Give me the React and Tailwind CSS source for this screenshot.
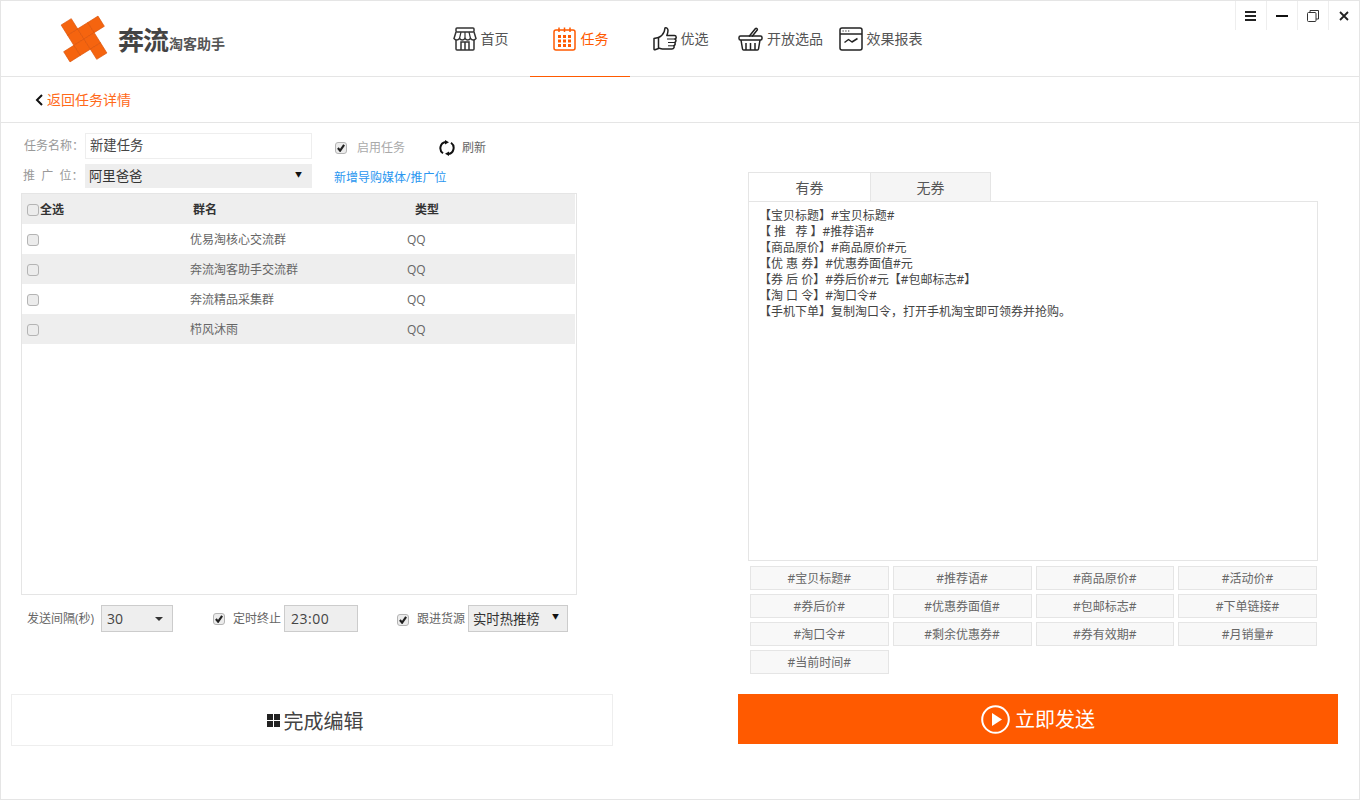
import React from "react"

const FONT = "font-['Open_Sans','Noto_Sans_CJK_SC',sans-serif]"

const navItems = [
  { label: "首页", icon: StoreIcon },
  { label: "任务", icon: CalendarIcon, active: true },
  { label: "优选", icon: ThumbIcon },
  { label: "开放选品", icon: BasketIcon },
  { label: "效果报表", icon: ReportIcon },
]

const groups = ["优易淘核心交流群", "奔流淘客助手交流群", "奔流精品采集群", "栉风沐雨"]

const template = [
  "【宝贝标题】#宝贝标题#",
  "【 推   荐 】#推荐语#",
  "【商品原价】#商品原价#元",
  "【优 惠 券】#优惠券面值#元",
  "【券 后 价】#券后价#元【#包邮标志#】",
  "【淘 口 令】#淘口令#",
  "【手机下单】复制淘口令，打开手机淘宝即可领券并抢购。",
]

const tags = [
  "#宝贝标题#", "#推荐语#", "#商品原价#", "#活动价#",
  "#券后价#", "#优惠券面值#", "#包邮标志#", "#下单链接#",
  "#淘口令#", "#剩余优惠券#", "#券有效期#", "#月销量#",
  "#当前时间#",
]

function StoreIcon() {
  return (
    <svg width="24" height="24" viewBox="0 0 24 24" fill="none" stroke="#333" strokeWidth="1.5">
      <rect x="3" y="1" width="18" height="4" rx="1" />
      <path d="M3 5L1 11.5C2.5 13.5 5 13.5 6.5 11.5C8 13.5 10.5 13.5 12 11.5C13.5 13.5 16 13.5 17.5 11.5C19 13.5 21.5 13.5 23 11.5L21 5" />
      <path d="M6.5 11.5L8 5M12 11.5V5M17.5 11.5L16 5" strokeWidth="1.2" />
      <path d="M3 13V22C3 22.6 3.4 23 4 23H20C20.6 23 21 22.6 21 22V13" />
      <path d="M8 23V15H16V23M12 15V23" />
    </svg>
  )
}

function CalendarIcon() {
  return (
    <svg width="24" height="24" viewBox="0 0 24 24" fill="none" stroke="#ff5a00" strokeWidth="1.5">
      <rect x="1" y="3" width="21" height="20" rx="2" />
      <path d="M6 0.5V5M11.5 0.5V5M17 0.5V5" />
      <g fill="#ff5a00" stroke="none">
        <rect x="5" y="8" width="3" height="3" />
        <rect x="10" y="8" width="3" height="3" />
        <rect x="15" y="8" width="3" height="3" />
        <rect x="5" y="12.5" width="3" height="3" />
        <rect x="10" y="12.5" width="3" height="3" />
        <rect x="15" y="12.5" width="3" height="3" />
        <rect x="5" y="17" width="3" height="3" />
        <rect x="10" y="17" width="3" height="3" />
        <rect x="15" y="17" width="3" height="3" />
      </g>
    </svg>
  )
}

function ThumbIcon() {
  return (
    <svg width="24" height="24" viewBox="0 0 24 24" fill="none" stroke="#222" strokeWidth="1.5" strokeLinejoin="round">
      <path d="M1 11.5L5.5 10.5V21.5L2 22.8C1.4 23 1 22.6 1 22Z" />
      <path d="M5.5 10.5C8 9.5 10 7.5 11 5C11.6 3.5 11.7 2 12 1C13.6 0.4 15 1.5 15 3.5C15 5.5 14.4 7 13.8 8.5H21.5C23.5 8.5 23.8 11.4 22 12C23.4 12.8 23.2 15 21.5 15.5C22.6 16.3 22.3 18.3 20.8 18.8C21.6 19.8 21 22 19 22H9.5C8 22 7 21.5 5.5 21" />
      <path d="M14 12H22M15 15.5H21.5M15 18.8H20.8" strokeWidth="1" />
    </svg>
  )
}

function BasketIcon() {
  return (
    <svg width="25" height="24" viewBox="0 0 25 24" fill="none" stroke="#222" strokeWidth="1.5" strokeLinejoin="round">
      <path d="M11 9.5L17.5 1.5C18.3 0.8 19.8 2 19.2 3L14 9.5" />
      <rect x="1" y="9" width="23" height="4" rx="1.5" />
      <path d="M3 13L4.5 22C4.6 22.6 5 23 5.6 23H19.4C20 23 20.4 22.6 20.5 22L22 13" />
      <path d="M8 16V23M12.5 16V23M17 16V23" />
    </svg>
  )
}

function ReportIcon() {
  return (
    <svg width="24" height="24" viewBox="0 0 24 24" fill="none" stroke="#222" strokeWidth="1.5" strokeLinejoin="round">
      <rect x="1" y="1" width="22" height="22" rx="2" />
      <path d="M1 7H23" />
      <path d="M3.5 4H4.7M6.3 4H7.5M9.1 4H10.3" strokeWidth="1.2" />
      <path d="M5.5 15.5L9.5 12.5L13 15L18.5 11.5" />
    </svg>
  )
}

function Logo() {
  const cells = [
    [-12, -12], [0, -12], [-12, 0], [0, 0],
    [12, -12], [-24, 0], [-12, -24], [0, 12],
  ]
  return (
    <svg width="56" height="52" viewBox="-28 -26 56 52">
      <g transform="rotate(-32)">
        {cells.map(([x, y]) => (
          <rect key={`${x}${y}`} x={x} y={y} width="12" height="12" fill="#f5640f" stroke="#d95208" strokeWidth="0.6" />
        ))}
      </g>
    </svg>
  )
}

function Check({ checked }) {
  return (
    <span className="flex h-[12px] w-[12px] shrink-0 items-center justify-center rounded-[3px] border border-[#b4b4b4] bg-[#ececec]">
      {checked && (
        <svg width="8" height="8" viewBox="0 0 9 9" fill="none" stroke="#222" strokeWidth="2.4">
          <path d="M1 4.5L3.5 7.5L8 1" />
        </svg>
      )}
    </span>
  )
}

function RefreshIcon() {
  return (
    <svg width="16" height="16" viewBox="0 0 16 16" fill="none" stroke="#111" strokeWidth="2">
      <path d="M4 13.3A6.3 6.3 0 0 1 6.5 2" />
      <path d="M12 2.7A6.3 6.3 0 0 1 9.5 14" />
      <path d="M6 0L10 2.2L6 4.6Z" fill="#111" stroke="none" />
      <path d="M10 16L6 13.8L10 11.4Z" fill="#111" stroke="none" />
    </svg>
  )
}

function WindowButtons() {
  return (
    <div className="absolute right-0 top-0 flex h-[29px]">
      <div className="flex w-[31px] items-center justify-center border-l border-[#eeeeee]">
        <svg width="12" height="10" viewBox="0 0 12 10" fill="#222">
          <rect y="0" width="11" height="2" />
          <rect y="4" width="11" height="2" />
          <rect y="8" width="11" height="2" />
        </svg>
      </div>
      <div className="flex w-[31px] items-center justify-center border-l border-[#eeeeee]">
        <div className="h-[2px] w-[12px] bg-[#111]" />
      </div>
      <div className="flex w-[31px] items-center justify-center border-l border-[#eeeeee]">
        <svg width="12" height="12" viewBox="0 0 12 12" fill="none" stroke="#333">
          <rect x="0.5" y="2.5" width="8.5" height="9" rx="1" />
          <path d="M3 2.5V0.5H11.5V9H9" />
        </svg>
      </div>
      <div className="flex w-[31px] items-center justify-center border-l border-[#eeeeee]">
        <svg width="10" height="10" viewBox="0 0 10 10" stroke="#222" strokeWidth="1.8">
          <path d="M1 1L9 9M9 1L1 9" />
        </svg>
      </div>
    </div>
  )
}

function Header() {
  return (
    <header className="relative flex h-[76px] border-b border-[#e5e5e5]">
      <div className="flex w-[429px] items-center pl-[55px]">
        <Logo />
        <span className="ml-[6px] mt-[2px] text-[26px] font-bold leading-none tracking-[-1px] text-[#444]">奔流</span>
        <span className="ml-[1px] mt-[10px] text-[14px] font-bold leading-none text-[#555]">淘客助手</span>
      </div>
      <nav className="flex">
        {navItems.map(({ label, icon: Icon, active }) => (
          <div
            key={label}
            className={`flex h-[76px] w-[100px] items-center justify-center gap-[4px] border-b pl-[1px] text-[14px] ${
              active ? "border-b-[#ff5a00] text-[#ff5a00]" : "border-b-transparent text-[#555]"
            }`}
          >
            <Icon />
            <span>{label}</span>
          </div>
        ))}
      </nav>
      <WindowButtons />
    </header>
  )
}

function TaskForm() {
  return (
    <>
      <div className="flex h-[26px] items-center">
        <span className="w-[64px] pl-[3px] text-[12px] text-[#999]">任务名称：</span>
        <div className="flex h-[26px] w-[227px] items-center border border-[#eeeeee] pl-[4px] text-[13.33px] text-[#444]">新建任务</div>
        <div className="ml-[23px] mt-[4px] flex items-center">
          <Check checked />
          <span className="ml-[10px] w-[82px] text-[12px] text-[#aaa]">启用任务</span>
          <RefreshIcon />
          <span className="ml-[7px] text-[12px] text-[#666]">刷新</span>
        </div>
      </div>
      <div className="mt-[5px] flex h-[24px] items-center">
        <span className="w-[64px] whitespace-pre pl-[2px] text-[12px] text-[#999]">推  广  位：</span>
        <div className="flex h-[24px] w-[227px] items-center justify-between bg-[#eeeeee] pl-[4px] pr-[10px] pt-[2px] text-[13.33px] text-[#333]">
          <span>阿里爸爸</span>
          <span className="mb-[3px] text-[7px] text-[#111]">▼</span>
        </div>
        <a className="ml-[22px] pt-[4px] text-[12px] text-[#2a96f0]">新增导购媒体/推广位</a>
      </div>
    </>
  )
}

function GroupTable() {
  return (
    <div className="mt-[5px] h-[402px] border border-[#e5e5e5] pr-[1px]">
      <div className="flex h-[30px] items-center bg-[#eeeeee] pl-[5px] pt-[2px] text-[12px] font-bold text-[#333]">
        <Check />
        <span className="ml-[1px] w-[153px]">全选</span>
        <span className="w-[222px]">群名</span>
        <span>类型</span>
      </div>
      {groups.map((name, i) => (
        <div key={name} className={`flex h-[30px] items-center pl-[5px] pt-[2px] text-[12px] text-[#666] ${i % 2 === 1 ? "bg-[#eeeeee]" : "bg-white"}`}>
          <Check />
          <span className="ml-[151px] w-[217px]">{name}</span>
          <span>QQ</span>
        </div>
      ))}
    </div>
  )
}

function SendOptions() {
  return (
    <div className="mt-[10px] flex h-[27px] items-center text-[#666]">
      <span className="ml-[6px] w-[74px] text-[12px]">发送间隔(秒)</span>
      <div className="flex h-[27px] w-[72px] items-center justify-between border border-[#cccccc] bg-[#eeeeee] pl-[5px] pr-[9px] text-[14px] text-[#444]">
        <span>30</span>
        <span className="h-0 w-0 border-x-[4px] border-t-[4px] border-x-transparent border-t-[#333]" />
      </div>
      <div className="ml-[40px]"><Check checked /></div>
      <span className="ml-[8px] w-[51px] text-[12px]">定时终止</span>
      <div className="flex h-[27px] w-[74px] items-center border border-[#cccccc] bg-[#eeeeee] pl-[6px] text-[14px] tracking-[0.5px] text-[#444]">23:00</div>
      <div className="ml-[39px] mt-[2px]"><Check checked /></div>
      <span className="ml-[8px] mt-[1px] w-[51px] text-[12px]">跟进货源</span>
      <div className="flex h-[27px] w-[100px] items-center justify-between border border-[#cccccc] bg-[#eeeeee] pl-[4px] pr-[8px] pt-[2px] text-[13.33px] text-[#333]">
        <span>实时热推榜</span>
        <span className="mb-[5px] text-[7px] text-[#111]">▼</span>
      </div>
    </div>
  )
}

function TemplateEditor() {
  return (
    <div className="ml-[171px] w-[570px] pt-[49px]">
      <div className="flex h-[29px] text-[14px] text-[#555]">
        <div className="flex w-[122px] items-center justify-center border-l border-t border-[#e5e5e5] bg-white">有券</div>
        <div className="flex w-[121px] items-center justify-center border-x border-t border-[#e5e5e5] bg-[#f5f5f5]">无券</div>
      </div>
      <div className="h-[360px] border border-[#e5e5e5] pl-[10px] pt-[6px] text-[12px] leading-[16px] text-[#444]">
        {template.map((line) => (
          <div key={line} className="whitespace-pre">{line}</div>
        ))}
      </div>
      <div className="ml-[2px] mt-[5px] grid w-[567px] grid-cols-4 gap-[4px]">
        {tags.map((tag) => (
          <div key={tag} className="flex h-[24px] items-center justify-center border border-[#e5e5e5] bg-[#f8f8f8] pt-[1px] text-[12px] text-[#666]">
            {tag}
          </div>
        ))}
      </div>
    </div>
  )
}

export default function App() {
  return (
    <div className={`h-[800px] w-[1360px] overflow-hidden border border-[#e5e5e5] bg-white ${FONT}`}>
      <Header />
      <div className="flex h-[46px] items-center border-b border-[#e5e5e5] pl-[34px]">
        <svg width="9" height="12" viewBox="0 0 9 12" fill="none" stroke="#111" strokeWidth="2">
          <path d="M7 1L2 6L7 11" />
        </svg>
        <span className="ml-[3px] text-[14px] text-[#ff6a1a]">返回任务详情</span>
      </div>
      <div className="flex h-[571px]">
        <div className="ml-[20px] w-[556px] pt-[10px]">
          <TaskForm />
          <GroupTable />
          <SendOptions />
        </div>
        <TemplateEditor />
      </div>
      <div className="flex items-start">
        <button className="ml-[10px] flex h-[52px] w-[602px] items-center justify-center gap-[4px] border border-[#eeeeee] pl-[6px] text-[20px] text-[#444]">
          <svg width="13" height="13" viewBox="0 0 13 13" fill="#222">
            <rect width="6" height="6" />
            <rect x="7" width="6" height="6" />
            <rect y="7" width="6" height="6" />
            <rect x="7" y="7" width="6" height="6" />
          </svg>
          <span className="mt-[3px]">完成编辑</span>
        </button>
        <button className="ml-[125px] flex h-[50px] w-[600px] items-center justify-center gap-[5px] bg-[#ff5a00] text-[20px] text-white">
          <svg width="29" height="29" viewBox="0 0 29 29" fill="none" stroke="#fff" strokeWidth="2">
            <circle cx="14.5" cy="14.5" r="13.3" />
            <path d="M11 8L21 14.5L11 21Z" fill="#fff" stroke="none" />
          </svg>
          <span className="mt-[2px]">立即发送</span>
        </button>
      </div>
    </div>
  )
}
